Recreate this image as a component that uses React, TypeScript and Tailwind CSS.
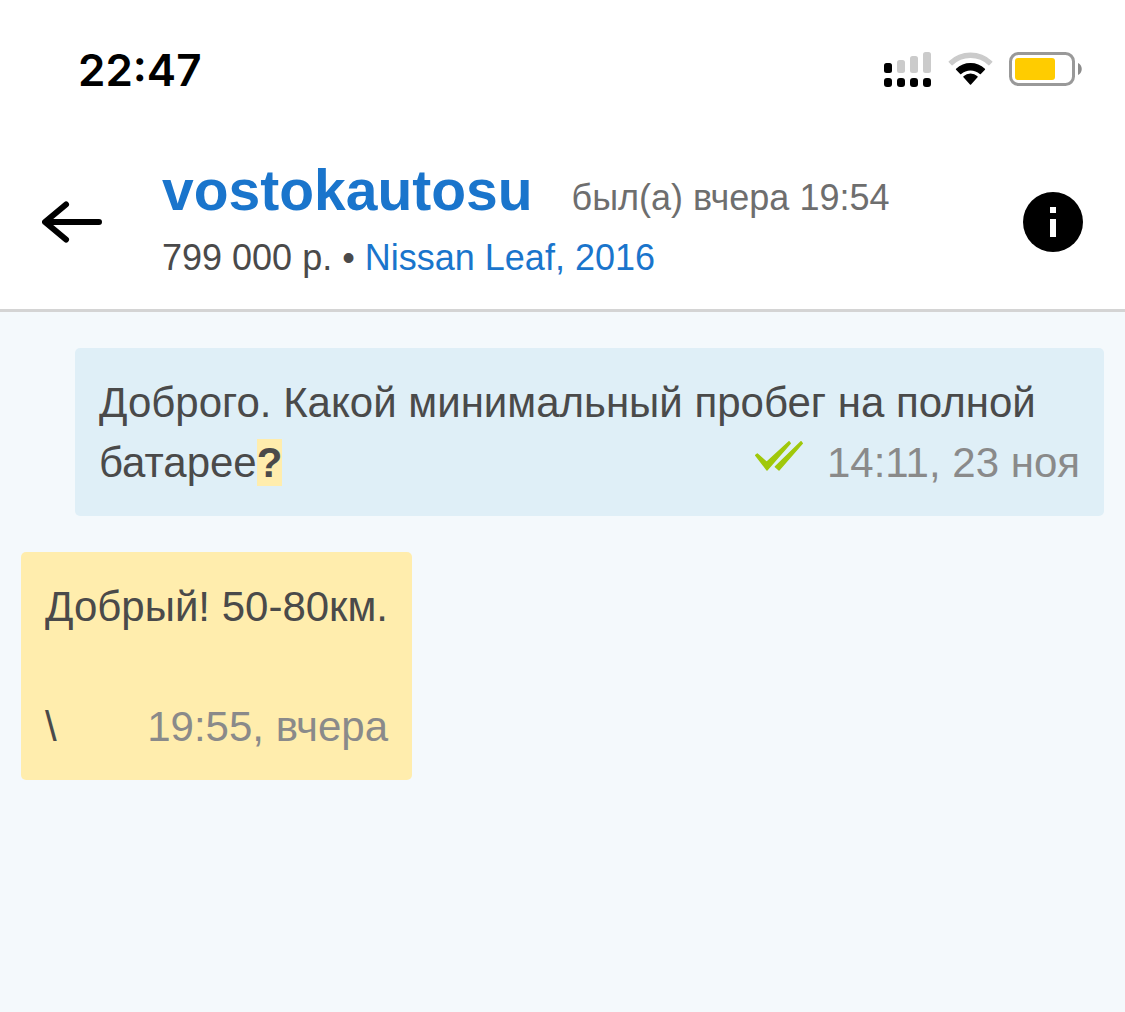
import React from 'react';

type Message = {
  id: number;
  own: boolean;
  lines: React.ReactNode[];
  time: string;
  read?: boolean;
};

const messages: Message[] = [
  {
    id: 1,
    own: true,
    lines: [
      'Доброго. Какой минимальный пробег на полной',
      <>
        батарее
        <mark className="bg-[#ffedad] font-bold text-[#4a4a4a]">?</mark>
      </>,
    ],
    time: '14:11, 23 ноя',
    read: true,
  },
  { id: 2, own: false, lines: ['Добрый! 50-80км.', '', '\\'], time: '19:55, вчера' },
];

const SignalIcon = () => (
  <svg width="49" height="36" viewBox="0 -1 49 36" aria-hidden="true">
    <g fill="#000">
      <rect x="0" y="11" width="8" height="10" rx="2.5" />
      <rect x="0" y="26" width="8" height="9" rx="3" />
      <rect x="13" y="26" width="8" height="9" rx="3" />
      <rect x="26" y="26" width="8" height="9" rx="3" />
      <rect x="39" y="26" width="8" height="9" rx="3" />
    </g>
    <g fill="#cbcbcb">
      <rect x="13" y="8" width="8" height="13" rx="2.5" />
      <rect x="26" y="4" width="8" height="17" rx="2.5" />
      <rect x="39" y="0" width="8" height="21" rx="2.5" />
    </g>
  </svg>
);

const WifiIcon = () => (
  <svg width="46" height="34" viewBox="0 0 46 34" strokeWidth="1.5" strokeLinejoin="round" aria-hidden="true">
    <path
      d="M1.3 9.8A30.7 30.7 0 0 1 43.7 9.8L41 12.6A26.8 26.8 0 0 0 4 12.6Z"
      fill="#cbcbcb"
      stroke="#cbcbcb"
    />
    <path d="M8.6 17.3A20.2 20.2 0 0 1 36.4 17.3L32.3 21.5A14.4 14.4 0 0 0 12.7 21.5Z" fill="#000" stroke="#000" />
    <path d="M16 24.8A9.7 9.7 0 0 1 29 24.8L22.5 32Z" fill="#000" stroke="#000" />
  </svg>
);

const BatteryIcon = () => (
  <svg width="74" height="34" viewBox="0 0 74 34" aria-hidden="true">
    <rect x="1.5" y="1.5" width="63" height="31" rx="8" fill="none" stroke="#999" strokeWidth="3" />
    <rect x="6" y="6" width="40" height="22" rx="3" fill="#fc0" />
    <path d="M69 11C74 13 74 21 69 23Z" fill="#8c8c8c" />
  </svg>
);

const ReadIcon = () => (
  <svg
    className="mt-2"
    width="48"
    height="30"
    viewBox="15 21 144 90"
    fill="#a0c80a"
    stroke="#a0c80a"
    strokeWidth="4"
    strokeLinejoin="round"
    aria-label="Прочитано"
  >
    <path d="M17 64L22 60L50 85L117 23L121 28L51 108Z" />
    <path d="M153 23L157 28L87 108L76 98Z" />
  </svg>
);

const StatusBar = () => (
  <div className="flex justify-between bg-white pt-12 pr-[42px] pb-[42px] pl-[78px]">
    <span className="font-['Inter',sans-serif] text-[44px] leading-[44px] font-semibold text-black">22:47</span>
    <div className="flex h-[42px] items-center gap-[15px]">
      <SignalIcon />
      <WifiIcon />
      <BatteryIcon />
    </div>
  </div>
);

const ChatHeader = () => (
  <header className="flex items-center gap-[60px] border-b-[3px] border-[#d4d4d4] bg-white px-[42px] pt-5 pb-[19px]">
    <button type="button" aria-label="Назад" className="shrink-0">
      <svg
        width="60"
        height="42"
        viewBox="0 0 60 42"
        fill="none"
        stroke="#000"
        strokeWidth="6"
        strokeLinecap="round"
        strokeLinejoin="round"
      >
        <path d="M57 21H4M24 3.5L3 21L24 38.5" />
      </svg>
    </button>
    <div className="min-w-0 flex-1">
      <div className="flex items-baseline gap-[39px]">
        <a href="#profile" className="text-[57px] leading-[72px] font-bold text-[#1a75cc]">
          vostokautosu
        </a>
        <span className="text-[36px] whitespace-nowrap text-[#6e6e6e]">был(а) вчера 19:54</span>
      </div>
      <div className="text-[36px] leading-[64px] text-[#4a4a4a]">
        799 000 р. •{' '}
        <a href="#advert" className="text-[#1a75cc]">
          Nissan Leaf, 2016
        </a>
      </div>
    </div>
    <button type="button" aria-label="Информация" className="shrink-0">
      <svg width="60" height="60" viewBox="0 0 60 60">
        <circle cx="30" cy="30" r="30" fill="#000" />
        <path d="M27 15h6v6h-6zM27 27h6v18h-6z" fill="#fff" />
      </svg>
    </button>
  </header>
);

const Bubble = ({ message }: { message: Message }) => {
  const body = message.lines.slice(0, -1);
  const lastLine = message.lines[message.lines.length - 1];

  return (
    <div
      className={`rounded-[5px] px-6 pt-[25px] pb-[23px] text-[42px] leading-[60px] text-[#4a4a4a] ${
        message.own ? 'ml-[54px] bg-[#dfeff7]' : 'self-start bg-[#ffedad]'
      }`}
    >
      {body.map((line, i) => (
        <p key={i} className="min-h-[60px]">
          {line}
        </p>
      ))}
      <div className="flex items-start justify-between">
        <p>{lastLine}</p>
        <div className="flex items-start gap-6 text-[#8a8a8a]">
          {message.read && <ReadIcon />}
          <time>{message.time}</time>
        </div>
      </div>
    </div>
  );
};

export default function App() {
  return (
    <div className="flex min-h-screen flex-col bg-[#f4f9fc] font-['Liberation_Sans',Arial,sans-serif]">
      <StatusBar />
      <ChatHeader />
      <main className="flex flex-1 flex-col gap-9 px-[21px] py-9">
        {messages.map((message) => (
          <Bubble key={message.id} message={message} />
        ))}
      </main>
    </div>
  );
}
